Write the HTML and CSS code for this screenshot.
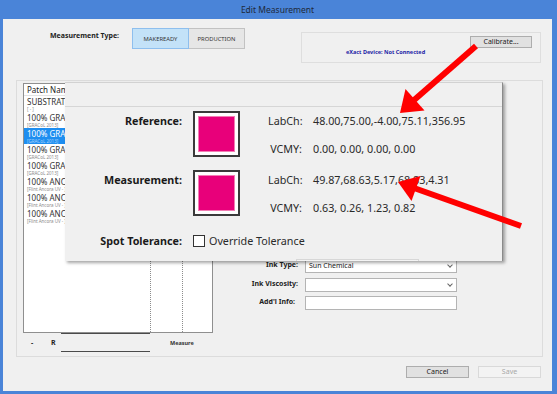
FILE: index.html
```html
<!DOCTYPE html>
<html lang="en">
<head>
    <meta charset="UTF-8">
    <meta name="viewport" content="width=device-width, initial-scale=1.0">
    <title>Edit Measurement</title>
    <link rel="stylesheet" href="styles.css">
</head>
<body>
    <div class="window">
        <div class="titlebar">Edit Measurement</div>

        <div class="client">
            <div class="top-row">
                <div class="mt-label">Measurement Type:</div>
                <div class="seg">
                    <button class="seg-btn active">MAKEREADY</button>
                    <button class="seg-btn">PRODUCTION</button>
                </div>
                <div class="device-box">
                    <button class="btn calibrate">Calibrate...</button>
                    <div class="device-status">eXact Device: Not Connected</div>
                </div>
            </div>

            <div class="main-group">
                <div class="left-col">
                    <div class="patch-list">
                        <div class="list-head">
                            <div class="col-1">Patch Name</div>
                            <div class="col-2"></div>
                            <div class="col-3"></div>
                        </div>
                        <div class="list-body">
                            <div class="col-1">
                                <div class="item"><div class="item-name">SUBSTRATE</div><div class="item-sub">[ - ]</div></div>
                                <div class="item"><div class="item-name">100% GRACoL</div><div class="item-sub">[GRACoL 2013]</div></div>
                                <div class="item selected"><div class="item-name">100% GRACoL</div><div class="item-sub">[GRACoL 2013]</div></div>
                                <div class="item"><div class="item-name">100% GRACoL</div><div class="item-sub">[GRACoL 2013]</div></div>
                                <div class="item"><div class="item-name">100% GRACoL</div><div class="item-sub">[GRACoL 2013]</div></div>
                                <div class="item"><div class="item-name">100% ANCORA</div><div class="item-sub">[Flint Ancora UV - ]</div></div>
                                <div class="item"><div class="item-name">100% ANCORA</div><div class="item-sub">[Flint Ancora UV - ]</div></div>
                                <div class="item"><div class="item-name">100% ANCORA</div><div class="item-sub">[Flint Ancora UV - ]</div></div>
                            </div>
                            <div class="col-2"></div>
                            <div class="col-3"></div>
                        </div>
                    </div>
                    <div class="list-foot">
                        <span class="foot-minus">-</span>
                        <span class="foot-r">R</span>
                        <div class="foot-bar"></div>
                        <span class="foot-measure">Measure</span>
                    </div>
                </div>

                <div class="ink-form">
                    <label>Ink Type:</label>
                    <div class="select">Sun Chemical<span class="chev"></span></div>
                    <label>Ink Viscosity:</label>
                    <div class="select"><span class="chev"></span></div>
                    <label class="short">Add'l Info:</label>
                    <div class="text-input"></div>
                </div>
            </div>

            <div class="dialog-buttons">
                <button class="btn">Cancel</button>
                <button class="btn disabled">Save</button>
            </div>
        </div>

        <!-- zoomed detail popup -->
        <div class="popup">
            <div class="popup-head"></div>
            <div class="sec">
                <div class="sec-label">Reference:</div>
                <div class="swatch"><div class="swatch-fill"></div></div>
                <div class="readings">
                    <span class="key">LabCh:</span><span>48.00,75.00,-4.00,75.11,356.95</span>
                    <span class="key">VCMY:</span><span>0.00, 0.00, 0.00, 0.00</span>
                </div>
            </div>
            <div class="sec sec-2">
                <div class="sec-label">Measurement:</div>
                <div class="swatch"><div class="swatch-fill"></div></div>
                <div class="readings">
                    <span class="key">LabCh:</span><span>49.87,68.63,5.17,68.83,4.31</span>
                    <span class="key">VCMY:</span><span>0.63, 0.26, 1.23, 0.82</span>
                </div>
            </div>
            <div class="sec sec-spot">
                <div class="sec-label">Spot Tolerance:</div>
                <div class="checkbox"></div>
                <span class="check-text">Override Tolerance</span>
            </div>
            <div class="popup-ghost"></div>
        </div>

        <svg class="arrows" width="557" height="394" viewBox="0 0 557 394">
            <line x1="476" y1="46" x2="413" y2="101" stroke="#f00" stroke-width="6"/>
            <polygon points="400,113 424.5,110.5 405.5,89" fill="#f00"/>
            <line x1="521" y1="226" x2="414" y2="188" stroke="#f00" stroke-width="6"/>
            <polygon points="398,182 420.5,176 411.5,201" fill="#f00"/>
        </svg>
    </div>
</body>
</html>
```

FILE: styles.css
```css
body {
    margin: 0;
    font-family: "Noto Sans", sans-serif;
    color: #222;
}
button {
    font-family: inherit;
    padding: 0;
    margin: 0;
}
.window {
    position: relative;
    width: 557px;
    height: 394px;
    box-sizing: border-box;
    background-color: #4a84d8;
    padding: 0 5px 3px 3px;
    display: flex;
    flex-direction: column;
    overflow: hidden;
}
.titlebar {
    height: 19px;
    line-height: 19px;
    text-align: center;
    font-size: 8.5px;
    color: #1e2a3a;
}
.client {
    flex: 1;
    background-color: #f0f0f0;
}

/* top row */
.top-row {
    display: flex;
    align-items: flex-start;
    padding: 9px 0 0 47px;
}
.mt-label {
    width: 82px;
    margin-top: 2.5px;
    font-size: 7px;
    font-weight: bold;
    line-height: 9px;
}
.seg {
    display: flex;
}
.seg-btn {
    height: 21px;
    width: 57px;
    font-size: 5.8px;
    color: #333;
    background-color: #e6e6e6;
    border: 1px solid #c2c2c2;
}
.seg-btn + .seg-btn {
    width: 56px;
    border-left: none;
}
.seg-btn.active {
    background-color: #c3e2f8;
    border-color: #8ebfee;
}
.device-box {
    margin: 4px 0 0 56px;
    width: 240px;
    height: 31px;
    box-sizing: border-box;
    border: 1px solid #dedede;
    padding: 3px 8px 0 0;
    display: flex;
    flex-direction: column;
}
.btn {
    height: 12px;
    width: 63px;
    font-size: 7px;
    line-height: 10px;
    color: #222;
    background-color: #e1e1e1;
    border: 1px solid #adadad;
}
.btn.calibrate {
    width: 62px;
    align-self: flex-end;
}
.btn.disabled {
    color: #a8a8a8;
    background-color: #f3f3f3;
    border-color: #d9d9d9;
}
.device-status {
    margin: 1px 0 0 44px;
    font-size: 5.5px;
    line-height: 6px;
    font-weight: bold;
    color: #1d1da6;
}

/* main group */
.main-group {
    margin: 17px 0 0 13px;
    width: 527px;
    height: 277px;
    box-sizing: border-box;
    border: 1px solid #dcdcdc;
    padding: 2px 0 0 6px;
    display: flex;
    align-items: flex-start;
}
.left-col {
    width: 190px;
}
.patch-list {
    height: 250px;
    box-sizing: border-box;
    border: 1px solid #8f8f8f;
    background-color: #fff;
    display: flex;
    flex-direction: column;
}
.list-head {
    display: flex;
    height: 11px;
    border-bottom: 1px solid #e3e3e3;
    font-size: 8px;
    line-height: 11px;
}
.list-body {
    flex: 1;
    display: flex;
}
.col-1 {
    width: 126px;
    overflow: hidden;
    white-space: nowrap;
}
.list-head .col-1 {
    padding-left: 3px;
    box-sizing: border-box;
}
.col-2 {
    width: 32px;
    box-sizing: border-box;
    border-left: 1px dotted #8c8c8c;
}
.col-3 {
    width: 30px;
    box-sizing: border-box;
    border-left: 1px dotted #8c8c8c;
}
.item {
    height: 16px;
    padding-left: 3px;
    box-sizing: border-box;
}
.item-name {
    padding-top: 1px;
    font-size: 8px;
    line-height: 10px;
    color: #333;
}
.item-sub {
    font-size: 4.5px;
    line-height: 5px;
    color: #8a8a8a;
}
.item.selected {
    background-color: #1e8ef0;
}
.item.selected .item-name {
    color: #fff;
}
.item.selected .item-sub {
    color: #a9d2fb;
}
.list-foot {
    display: flex;
    align-items: center;
    height: 19px;
}
.foot-minus {
    width: 20px;
    padding-left: 8px;
    font-size: 7px;
    font-weight: bold;
}
.foot-r {
    width: 10px;
    font-size: 7px;
    font-weight: bold;
}
.foot-bar {
    width: 89px;
    height: 19px;
    margin-top: -1px;
    box-sizing: border-box;
    border-top: 1px solid #4a4a4a;
    border-bottom: 1px solid #4a4a4a;
}
.foot-measure {
    margin-left: 20px;
    font-size: 5.5px;
    font-weight: bold;
    color: #333;
}

/* ink form */
.ink-form {
    margin-top: 176px;
    display: grid;
    grid-template-columns: 85px 152px;
    grid-auto-rows: 14px;
    column-gap: 7px;
    row-gap: 4.5px;
}
.ink-form label {
    text-align: right;
    font-size: 7px;
    font-weight: bold;
    line-height: 11px;
}
.ink-form label.short {
    padding-right: 3px;
}
.select, .text-input {
    position: relative;
    box-sizing: border-box;
    background-color: #fff;
    border: 1px solid #b4b4b4;
    font-size: 7px;
    line-height: 12px;
    padding-left: 3px;
}
.chev {
    position: absolute;
    right: 4px;
    top: 3px;
    width: 3px;
    height: 3px;
    border-right: 1px solid #666;
    border-bottom: 1px solid #666;
    transform: rotate(45deg);
}

.dialog-buttons {
    display: flex;
    justify-content: flex-end;
    gap: 9px;
    padding-right: 11px;
    margin-top: 9px;
}

/* popup */
.popup {
    position: absolute;
    left: 65px;
    top: 82px;
    width: 438px;
    height: 179px;
    box-sizing: border-box;
    background-color: #f0f0f0;
    border-top: 1px solid #d2d2d2;
    border-right: 1px solid #8a8a8a;
    box-shadow: 2px 2px 3px rgba(0,0,0,0.35);
    overflow: hidden;
    font-size: 10.75px;
    color: #2a2a2a;
}
.popup-head {
    height: 23px;
    border-bottom: 1px solid #d6d6d6;
}
.sec {
    display: flex;
    align-items: flex-start;
    margin-top: 4px;
}
.sec-2 {
    margin-top: 11px;
}
.sec-spot {
    margin-top: 13px;
    align-items: center;
    line-height: 20px;
}
.sec-label {
    width: 117px;
    text-align: right;
    font-weight: bold;
    line-height: 20px;
    color: #1a1a1a;
}
.swatch {
    margin-left: 11px;
    width: 47px;
    height: 46px;
    box-sizing: border-box;
    border: 2px solid #3a3a3a;
    background-color: #fff;
    padding: 4px;
}
.swatch-fill {
    width: 100%;
    height: 100%;
    background-color: #e8007a;
    box-shadow: 0 0 0 1px #f37db4;
}
.readings {
    margin-left: 28px;
    display: grid;
    grid-template-columns: 34px auto;
    column-gap: 11px;
    row-gap: 8px;
    line-height: 20px;
}
.key {
    text-align: right;
}
.checkbox {
    margin-left: 11px;
    width: 12px;
    height: 12px;
    box-sizing: border-box;
    border: 1px solid #333;
    background-color: #fff;
}
.check-text {
    margin-left: 4px;
}
.popup-ghost {
    margin: 8px 0 0 231px;
    width: 123px;
    height: 10px;
    box-sizing: border-box;
    border: 1px solid #d7d7d7;
    background-color: #f4f4f4;
}

.arrows {
    position: absolute;
    left: 0;
    top: 0;
    pointer-events: none;
}
```
